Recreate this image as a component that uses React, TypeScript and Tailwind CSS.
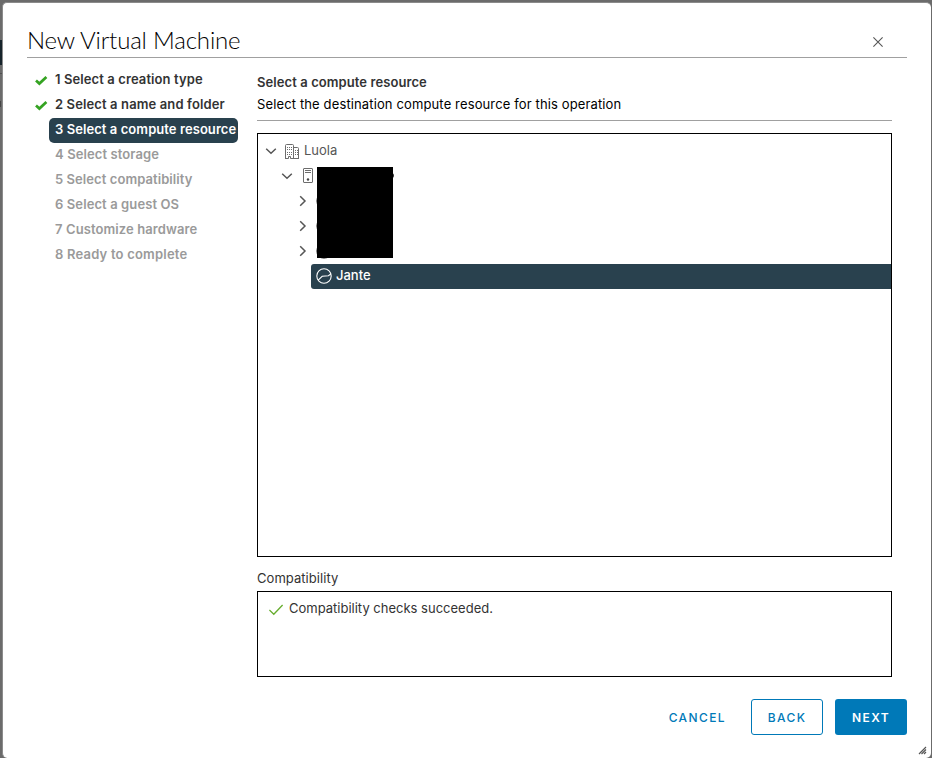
import React from "react";

const FONT = "font-['Inter','Liberation_Sans',sans-serif]";

const steps = [
  { label: "1 Select a creation type", state: "done", tracking: "tracking-[0.1px]" },
  { label: "2 Select a name and folder", state: "done", tracking: "tracking-[0.12px]" },
  { label: "3 Select a compute resource", state: "active", tracking: "tracking-[0.07px]" },
  { label: "4 Select storage", state: "todo", tracking: "tracking-[0.1px]" },
  { label: "5 Select compatibility", state: "todo", tracking: "tracking-[0.07px]" },
  { label: "6 Select a guest OS", state: "todo", tracking: "tracking-[0.1px]" },
  { label: "7 Customize hardware", state: "todo", tracking: "tracking-[0.1px]" },
  { label: "8 Ready to complete", state: "todo", tracking: "tracking-[0.2px]" },
];

const stepStyle: Record<string, string> = {
  done: "text-[#333333]",
  active: "rounded-[5px] bg-[#29414e] text-white",
  todo: "text-[#9a9a9a]",
};

function DoneCheck() {
  return (
    <svg width="13" height="10" viewBox="0 0 13 10" className="block">
      <path d="M1 4.5 4.4 7.6 11.4 1" fill="none" stroke="#35a322" strokeWidth="2.7" />
    </svg>
  );
}

function Chevron({ open }: { open?: boolean }) {
  return (
    <svg width="12" height="12" viewBox="0 0 12 12" className="block shrink-0" fill="none" stroke="#565656" strokeWidth="1.5">
      {open ? <path d="M1.2 3.8 6 8.2 10.8 3.8" /> : <path d="M3.2 1.2 8 6 3.2 10.8" />}
    </svg>
  );
}

function DatacenterIcon() {
  return (
    <svg width="14" height="15" viewBox="0 0 14 15" className="block shrink-0" fill="none" stroke="#6c6c6c" strokeWidth="1">
      <path d="M.5 14.5V1.5Q.5.5 1.5.5h6q1 0 1 1v13M8.5 3.5h4q1 0 1 1v10M0 14.5h3.5v-2h2v2H14" />
      <path d="M2 3.5h5.5M2 5.5h5.5M2 8.5h5.5M2 10.5h5.5M10 6.5h3M10 8.5h3M10 10.5h3" strokeDasharray="1 1" />
    </svg>
  );
}

function HostIcon() {
  return (
    <svg width="10" height="15" viewBox="0 0 10 15" className="block shrink-0" fill="none" stroke="#6c6c6c">
      <rect x=".5" y=".5" width="9" height="14" rx=".5" />
      <path d="M2 2.5h6M2 4.5h6" />
      <circle cx="5" cy="11.5" r="1.2" fill="#444444" stroke="none" />
    </svg>
  );
}

function PoolIcon() {
  return (
    <svg width="16" height="16" viewBox="0 0 16 16" className="block shrink-0" fill="none" stroke="currentColor" strokeWidth="1.1">
      <circle cx="8" cy="8" r="7.2" />
      <path d="M2.2 12.2 6.2 8.3 12.4 7.7 14.8 6" />
    </svg>
  );
}

export default function App() {
  return (
    <div className={`relative flex h-[758px] w-[932px] overflow-hidden bg-[#6b6b6b] ${FONT} text-[13px] leading-[25px] text-[#333333]`}>
      <div className="absolute left-0 top-[40px] h-[25px] w-[3px] bg-[#17242b]" />
      <div className="absolute left-0 top-[73px] h-px w-[3px] bg-[#505050]" />
      <div className="absolute left-0 top-[101px] h-[6px] w-px bg-[#454545]" />
      <div className="relative ml-[2px] mt-[2px] flex h-[756px] w-[929px] flex-col rounded-[5px] border-l border-t border-[#8b8b8b] bg-white pl-[24px] pr-[24px]">
        <header className="flex h-[55px] shrink-0 justify-between border-b border-[#a0a0a0] pt-[21px]">
          <h1 className="font-['Lato',sans-serif] text-[24px] font-light leading-[32px] tracking-[-0.17px] text-black">New Virtual Machine</h1>
          <button className="mr-[24px] mt-[13px] h-[10px] w-[10px]" aria-label="Close">
            <svg width="10" height="10" viewBox="0 0 10 10" className="block" stroke="#555555" strokeWidth="1.1">
              <path d="M.4.4 9.6 9.6M9.6.4.4 9.6" />
            </svg>
          </button>
        </header>
        <div className="flex">
          <nav className="w-[230px] shrink-0 pt-[10px]">
            {steps.map((s) => (
              <div key={s.label} className="flex h-[25px] items-center">
                <div className="w-[22px] shrink-0 pl-[8px]">{s.state === "done" && <DoneCheck />}</div>
                <div className={`h-[25px] w-[189px] whitespace-nowrap pl-[6px] font-semibold leading-[23px] ${stepStyle[s.state]} ${s.tracking}`}>
                  {s.label}
                </div>
              </div>
            ))}
          </nav>
          <main className="w-[635px] pt-[13px]">
            <h2 className="h-[22px] font-semibold leading-[23px] tracking-[0.08px]">Select a compute resource</h2>
            <p className="h-[28px] border-b border-[#a0a0a0] leading-[23px] tracking-[0.13px] text-black">
              Select the destination compute resource for this operation
            </p>
            <div className="mt-[12px] h-[424px] border border-black pt-[4px]">
              <div className="flex h-[25px] items-center pl-[7px]">
                <Chevron open />
                <span className="ml-[8px] pt-px"><DatacenterIcon /></span>
                <span className="ml-[5px] text-[#565656]">Luola</span>
              </div>
              <div className="relative">
                <div className="flex h-[25px] items-center pl-[23px]">
                  <Chevron open />
                  <span className="ml-[10px]"><HostIcon /></span>
                </div>
                {[0, 1, 2].map((i) => (
                  <div key={i} className="flex h-[25px] items-center pl-[39px] text-[#565656]">
                    <Chevron />
                    <span className="ml-[7px]"><PoolIcon /></span>
                  </div>
                ))}
                <div className="absolute left-[133px] top-[10px] h-[5px] w-[3px] rounded-r bg-[#333333]" />
                <div className="absolute left-[59px] top-[4px] h-[91px] w-[76px] bg-black" />
              </div>
              <div className="ml-[53px] mt-px flex h-[25px] items-center rounded-l-[3px] bg-[#29414e] pl-[5px] font-medium text-white">
                <span className="-mt-px"><PoolIcon /></span>
                <span className="ml-[4px] pb-[2px] leading-[23px]">Jante</span>
              </div>
            </div>
            <div className="h-[34px] pt-[9px] tracking-[0.05px]">Compatibility</div>
            <div className="flex h-[86px] border border-black pl-[11px] pt-[4px]">
              <svg width="15" height="12" viewBox="0 0 15 12" className="mt-[8px] block" fill="none" stroke="#67ad2e" strokeWidth="1.3">
                <path d="M.4 6 4.8 10.3 13.6 1" />
              </svg>
              <span className="ml-[5px]">Compatibility checks succeeded.</span>
            </div>
          </main>
        </div>
        <footer className="mt-[22px] flex h-[36px] justify-end text-[12px] font-medium leading-[37px] tracking-[1.4px]">
          <button className="mr-[25px] text-[#0079b8]">CANCEL</button>
          <button className="mr-[12px] w-[72px] rounded-[3px] border border-[#0079b8] leading-[35px] text-[#0079b8]">BACK</button>
          <button className="w-[72px] rounded-[3px] bg-[#0079b8] font-semibold text-white">NEXT</button>
        </footer>
        <svg width="9" height="9" viewBox="0 0 9 9" className="absolute bottom-[3px] right-[4px]" stroke="#555555" strokeWidth="1.2">
          <path d="M1 8 8 1M3.5 8 8 3.5M6 8 8 6" />
        </svg>
      </div>
    </div>
  );
}
